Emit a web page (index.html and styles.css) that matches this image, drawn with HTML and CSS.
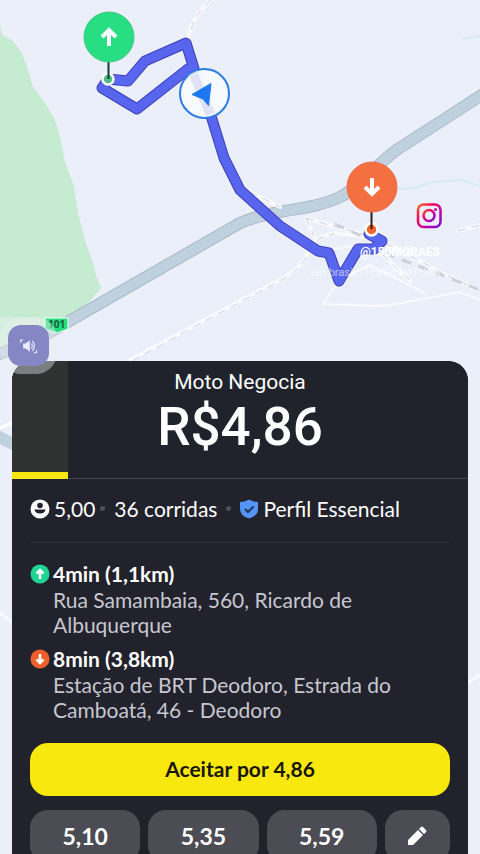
FILE: index.html
```html
<!DOCTYPE html>
<html lang="pt-BR">
<head>
<meta charset="utf-8">
<meta name="viewport" content="width=device-width, initial-scale=1">
<title>Moto Negocia</title>
<link rel="stylesheet" href="styles.css">
</head>
<body>
<main class="screen">
  <svg class="map" viewBox="0 0 480 854" preserveAspectRatio="xMidYMin slice" role="img" aria-label="Mapa da rota">
    <defs>
      <linearGradient id="insta" x1="0" y1="0" x2="1" y2="1">
        <stop offset="0" stop-color="#ff6a1f"/>
        <stop offset=".3" stop-color="#f5075f"/>
        <stop offset=".65" stop-color="#c401a4"/>
        <stop offset="1" stop-color="#7a08d8"/>
      </linearGradient>
    </defs>
    <rect width="480" height="854" fill="#ebeff9"/>
    <path d="M0 24 2 35 12 40 22 53 27 67 33 87 45 103 55 120 60 137 64 158 68 170 74 186 78 213 86 244 92 260 96 275 101 288 92 299 70 318 45 330 0 348Z" fill="#c5ebd1"/>
    <path d="M0 317H40V343L0 350Z" fill="#d5eee0"/>
    <path d="M462 39 480 36M398 189 416 188 432 182 462 180 480 186" fill="none" stroke="#cdebf1" stroke-width="1.5"/>
    <g fill="none" stroke-linecap="round" stroke-linejoin="round">
      <path d="M0 354 45 335 240 223C275 208 310 212 342 196 360 186 379 162 398 149L485 93" stroke="#a9bac7" stroke-width="12"/>
      <path d="M0 354 45 335 240 223C275 208 310 212 342 196 360 186 379 162 398 149L485 93" stroke="#bfd1de" stroke-width="10"/>
      <path d="M-5 435 15 445" stroke="#bfd1de" stroke-width="12"/>
      <path d="M0 428 14 422" stroke="#fff" stroke-width="3"/>
      <g stroke="#f9fafe" stroke-width="4">
        <path d="M213-2C198 12 192 20 188 38M250 192 280 207M306 218 325 224 367 235 400 250 440 272 482 292M130 360 190 328 285 277Q304 265 308 252 314 236 335 233L370 237M306 218 314 236M458 231 480 225M383 255 410 281"/>
        <path d="M323 304 339 280 370 265 426 294M323 304 385 306 460 292 482 301M330 250 352 246" stroke-width="2"/>
        <path d="M0 613 12 622M480 675 468 682" stroke-width="3"/>
      </g>
      <g stroke="#ced1dc" stroke-width="1" stroke-dasharray="8 6" stroke-linecap="butt">
        <path d="M211 0C198 12 193 20 190 34M250 192 280 207M306 218 325 224 367 235 400 250 440 272 482 292M132 361 190 329 285 278Q304 266 308 252 314 237 335 234M306 218 314 236M458 231 480 225M383 255 410 281"/>
      </g>
      <path d="M385 253 480 290M335 224 379 244" stroke="#cfd0d9" stroke-width="3" stroke-dasharray="10 8" stroke-linecap="butt"/>
      <path d="M108 79 128 81 145 61 186 43 195 72 188 69 137 109 102 88 108 79M195 72 212 119 224 158 240 190 280 226 318 251 329 253 339 281 358 249 374 249 382 241 369 234" stroke="#3e40b8" stroke-width="11"/>
      <path d="M108 79 128 81 145 61 186 43 195 72 188 69 137 109 102 88 108 79M195 72 212 119 224 158 240 190 280 226 318 251 329 253 339 281 358 249 374 249 382 241 369 234" stroke="#5865ee" stroke-width="9"/>
    </g>

    <path d="M45 318H68V329L57 333 45 329Z" fill="#27dd7e" stroke="#f5fff9"/>
    <text class="road-label" x="48" y="328">101</text>

    <circle cx="108" cy="79" r="5.500" fill="#50bd83" stroke="#fff" stroke-width="2.500"/>
    <path d="M108.500 60V79" stroke="#123c36" stroke-width="2"/>
    <circle cx="109" cy="37" r="25" fill="#27df82" stroke="#43c986"/>
    <path d="M109 46V31M102 37 109 30 116 37" fill="none" stroke="#fff" stroke-width="4"/>

    <circle cx="204.500" cy="93.500" r="24.500" fill="#f6f9fe" stroke="#2e7be2" stroke-width="2"/>
    <path d="M189 75 197 71 215 113 206 116Z" fill="#e0e2f5"/>
    <path d="M192 94.500 211 83.500 208.500 105.500 203 99Z" fill="#1e78f0" stroke="#1e78f0" stroke-linejoin="round"/>

    <circle cx="371.500" cy="229.500" r="6" fill="#f1652e" stroke="#fff" stroke-width="2.500"/>
    <path d="M371.500 211V229" stroke="#301d20" stroke-width="2"/>
    <circle cx="372" cy="187" r="25" fill="#f47040" stroke="#ee6a4a"/>
    <path d="M372 178V193M365 187 372 194 379 187" fill="none" stroke="#fff" stroke-width="4"/>

    <g fill="none" stroke="url(#insta)" stroke-width="2.500">
      <rect x="418" y="204.500" width="22.500" height="22.500" rx="5.500"/>
      <circle cx="429" cy="215.500" r="5.500"/>
    </g>
    <circle cx="435.500" cy="209.500" r="1.500" fill="#c401a4"/>
    <text class="watermark" x="440" y="256" text-anchor="end">@150MORAES</text>
    <text class="watermark-small" x="440" y="276" text-anchor="end">em brasil · TEMPERATURA</text>
  </svg>

  <section class="sheet">
    <header class="offer">
      <div class="timer"></div>
      <h1 class="service">Moto Negocia</h1>
      <p class="price">R$4,86</p>
    </header>

    <div class="details">
      <div class="rider">
        <svg class="icon" viewBox="0 0 20 20" aria-hidden="true">
          <circle cx="10" cy="10" r="9.500" fill="#fff"/>
          <circle cx="10" cy="6.500" r="2.800" fill="#21222b"/>
          <path d="M4.500 10.500H15.500Q15 14.500 10 14.500T4.500 10.500Z" fill="#21222b"/>
        </svg>
        <span>5,00</span>
        <i class="dot"></i>
        <span>36 corridas</span>
        <i class="dot dot-wide"></i>
        <svg class="icon" viewBox="0 0 20 20" aria-hidden="true">
          <path d="M10 .500Q14 3 19 3V10Q19 17 10 19.500 1 17 1 10V3Q6 3 10 .500Z" fill="#5494f7"/>
          <path d="M6 10 9 13 14.500 7.500" fill="none" stroke="#20345e" stroke-width="2"/>
        </svg>
        <span>Perfil Essencial</span>
      </div>

      <ol class="stops">
        <li class="stop">
          <svg class="icon" viewBox="0 0 20 20" aria-hidden="true">
            <circle cx="10" cy="10" r="9.500" fill="#20d492"/>
            <path d="M10 15V6M6.500 9.500 10 6 13.500 9.500" fill="none" stroke="#fff" stroke-width="2.500"/>
          </svg>
          <div>
            <h2 class="leg">4min (1,1km)</h2>
            <p class="address">Rua Samambaia, 560, Ricardo de Albuquerque</p>
          </div>
        </li>
        <li class="stop">
          <svg class="icon" viewBox="0 0 20 20" aria-hidden="true">
            <circle cx="10" cy="10" r="9.500" fill="#f0602c"/>
            <path d="M10 5V14M6.500 10.500 10 14 13.500 10.500" fill="none" stroke="#fff" stroke-width="2.500"/>
          </svg>
          <div>
            <h2 class="leg">8min (3,8km)</h2>
            <p class="address">Estação de BRT Deodoro, Estrada do Camboatá, 46 - Deodoro</p>
          </div>
        </li>
      </ol>

      <button class="accept" type="button">Aceitar por 4,86</button>
      <div class="bids">
        <button class="bid" type="button">5,10</button>
        <button class="bid" type="button">5,35</button>
        <button class="bid" type="button">5,59</button>
        <button class="bid" type="button" aria-label="Editar valor">
          <svg class="icon" viewBox="0 0 20 20" aria-hidden="true">
            <path d="M1 19V14L11 4 16 9 6 19ZM12 3 14 1Q15 0 16 1L19 4Q20 5 19 6L17 8Z" fill="#fff"/>
          </svg>
        </button>
      </div>
    </div>
  </section>

  <button class="sound" type="button" aria-label="Som">
    <svg viewBox="0 0 24 24" aria-hidden="true">
      <path d="M5 9H8L13 5V19L8 15H5Z" fill="#e7edff"/>
      <path d="M15 9Q17 12 15 15M16 6Q21 12 16 18M2 8V5H5M18 20H21V17" fill="none" stroke="#dbe4fb" stroke-width="1.500"/>
    </svg>
  </button>
</main>
</body>
</html>
```
FILE: styles.css
```css
* {
  box-sizing: border-box;
  margin: 0;
  padding: 0;
}

body {
  font-family: Roboto, "Liberation Sans", sans-serif;
  color: #fff;
  background: #ebeff9;
}

.screen {
  position: relative;
  height: 100vh;
  padding: 361px 12px 0;
  overflow: hidden;
}

.map {
  position: absolute;
  inset: 0;
  width: 100%;
  height: 100%;
}

.road-label {
  font: 700 10px "Open Sans", sans-serif;
  fill: #14603c;
}

.watermark {
  font: 700 12px Roboto, sans-serif;
  fill: #fff;
}

.watermark-small {
  font: 400 11px Roboto, sans-serif;
  fill: #fff;
  opacity: 0.6;
}

.sheet {
  position: relative;
  border-radius: 20px 20px 0 0;
  background: #21222b;
  overflow: hidden;
}

.offer {
  position: relative;
  height: 118px;
  padding-top: 8px;
  border-bottom: 1px solid #41424a;
  background: #20232b;
  text-align: center;
}

.timer {
  position: absolute;
  top: 0;
  bottom: -1px;
  left: 0;
  width: 56px;
  border-bottom: 7px solid #fae611;
  background: #303232;
}

.service {
  position: relative;
  font-size: 21px;
  font-weight: 400;
  line-height: 26px;
}

.price {
  position: relative;
  font-size: 53px;
  font-weight: 500;
  line-height: 64px;
}

.details {
  padding: 0 18px;
  font-family: Lato, Roboto, sans-serif;
}

.icon {
  flex: none;
  width: 20px;
  height: 20px;
}

.rider {
  display: flex;
  align-items: center;
  gap: 4px;
  height: 64px;
  padding-bottom: 4px;
  border-bottom: 1px solid #2d2e37;
  font-size: 21px;
  white-space: nowrap;
}

.dot {
  width: 5px;
  height: 5px;
  margin: 0 5px 0 1px;
  border-radius: 50%;
  background: #4e4f58;
}

.dot-wide {
  margin: 0 4px 0 5px;
}

.stops {
  display: grid;
  gap: 8px;
  padding: 17px 0 21px;
  list-style: none;
}

.stop {
  display: flex;
  gap: 3px;
}

.stop .icon {
  margin-top: 4px;
}

.leg {
  font-size: 21px;
  font-weight: 700;
  line-height: 27px;
}

.address {
  color: #c6c7d0;
  font-size: 21px;
  line-height: 25px;
}

.accept,
.bid {
  padding-bottom: 2px;
  border: 0;
  border-radius: 18px;
  font-family: inherit;
}

.accept {
  width: 100%;
  height: 53px;
  background: #f9e80d;
  color: #17150c;
  font-size: 21px;
  font-weight: 700;
}

.bids {
  display: grid;
  grid-template-columns: 110fr 110fr 110fr 65fr;
  gap: 8px;
  margin-top: 14px;
}

.bid {
  display: flex;
  align-items: center;
  justify-content: center;
  height: 53px;
  background: #4b4c54;
  color: #fff;
  font-size: 23px;
  font-weight: 700;
}

.sound {
  position: absolute;
  top: 325px;
  left: 8px;
  width: 41px;
  height: 41px;
  border: 0;
  border-radius: 13px;
  background: #8487c3;
  box-shadow: 0 0 0 8px rgb(235 240 240 / 0.4);
}

.sound svg {
  display: block;
  width: 20px;
  height: 20px;
  margin: 0 auto;
}
```
